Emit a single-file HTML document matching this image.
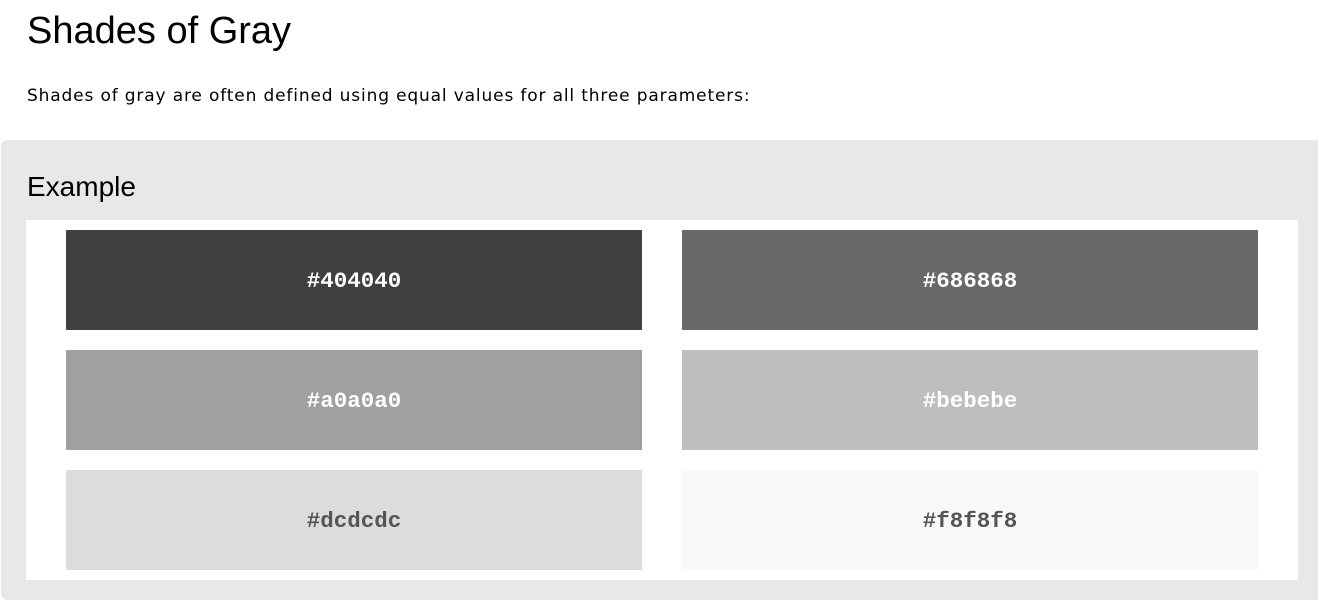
<!DOCTYPE html>
<html><head><style>
body{margin:0;background:#fff;width:1318px;height:583px;overflow:hidden;font-family:"DejaVu Sans",Verdana,sans-serif;}
h1{position:absolute;left:27px;top:10px;margin:0;font:400 38px "Liberation Sans",sans-serif;color:#000;}
p{position:absolute;left:27px;top:86px;margin:0;font-size:17px;letter-spacing:0.85px;color:#000;}
.panel{position:absolute;left:1px;top:140px;width:1330px;height:460px;background:#e7e8ea;border-radius:6px;}
h2{position:absolute;left:27px;top:171px;margin:0;font:400 28px "Liberation Sans",sans-serif;color:#000;}
.inner{position:absolute;left:26px;top:220px;width:1272px;height:360px;background:#fff;}
.s{position:absolute;width:576px;height:100px;display:flex;align-items:center;justify-content:center;font:700 22.5px "Liberation Mono",monospace;color:#fff;padding-top:2px;box-sizing:border-box;}
</style></head><body>
<h1>Shades of Gray</h1>
<p>Shades of gray are often defined using equal values for all three parameters:</p>
<div class="panel"></div>
<h2>Example</h2>
<div class="inner"></div>
<div class="s" style="left:66px;top:230px;background:#404040">#404040</div>
<div class="s" style="left:682px;top:230px;background:#686868">#686868</div>
<div class="s" style="left:66px;top:350px;background:#a0a0a0">#a0a0a0</div>
<div class="s" style="left:682px;top:350px;background:#bebebe">#bebebe</div>
<div class="s" style="left:66px;top:470px;background:#dcdcdc;color:#555">#dcdcdc</div>
<div class="s" style="left:682px;top:470px;background:#f8f8f8;color:#555">#f8f8f8</div>
</body></html>
